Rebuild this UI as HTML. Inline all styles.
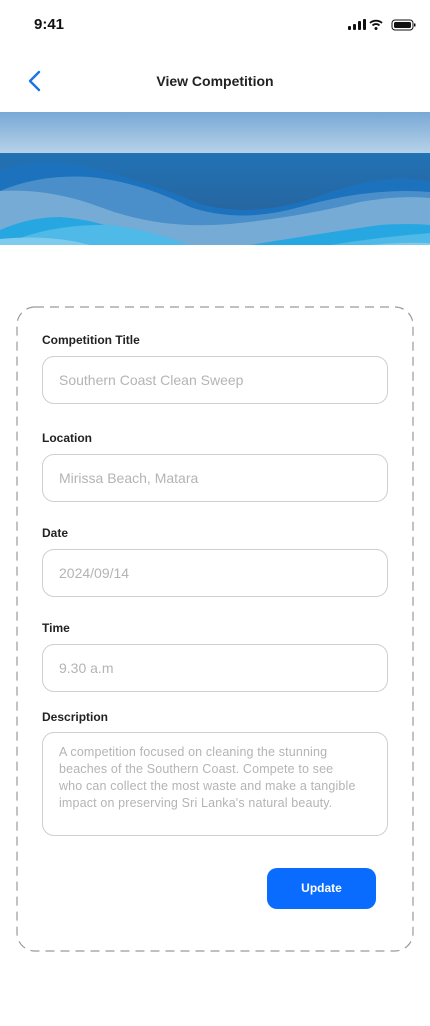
<!DOCTYPE html>
<html><head><meta charset="utf-8"><style>
*{box-sizing:border-box;margin:0;padding:0}
body{width:430px;height:1026px;background:#fff;font-family:"Liberation Sans",sans-serif;position:relative;overflow:hidden;color:#222}
.abs{position:absolute}
.lbl{position:absolute;left:42px;font-size:12px;font-weight:bold;color:#222}
.inp{position:absolute;left:42px;width:346px;height:48px;border:1px solid #cfcfcf;border-radius:12px;font-size:14px;color:#b4b4b4;padding-left:16px;line-height:46px}
</style></head><body>
<div class="abs" style="left:34px;top:16px;font-size:15px;font-weight:bold;color:#111">9:41</div>
<svg class="abs" style="left:348px;top:18px" width="68" height="14" viewBox="0 0 68 14">
<rect x="0" y="8" width="3" height="4" rx="1" fill="#111"/><rect x="5" y="6" width="3" height="6" rx="1" fill="#111"/><rect x="10" y="3" width="3" height="9" rx="1" fill="#111"/><rect x="15" y="1" width="3" height="11" rx="1" fill="#111"/>
<path d="M22 5a9 9 0 0 1 12 0M24.5 7.5a5 5 0 0 1 7 0" stroke="#111" stroke-width="1.8" fill="none"/><circle cx="28" cy="10.5" r="1.5" fill="#111"/>
<rect x="44" y="2" width="21" height="10" rx="3" fill="none" stroke="#111" stroke-width="1"/><rect x="46" y="4" width="17" height="6" rx="1.5" fill="#111"/><rect x="66" y="5.5" width="1.5" height="3" fill="#111"/>
</svg>
<svg class="abs" style="left:27px;top:70px" width="16" height="22" viewBox="0 0 16 22"><path d="M12 2L3 11l9 9" stroke="#1a73e8" stroke-width="2.4" fill="none" stroke-linecap="round" stroke-linejoin="round"/></svg>
<div class="abs" style="left:0;width:430px;top:73px;text-align:center;font-size:14px;font-weight:bold;color:#222">View Competition</div>
<svg class="abs" style="left:0;top:112px" width="430" height="133" viewBox="0 0 430 133">
<defs><linearGradient id="sky" x1="0" y1="0" x2="0" y2="1"><stop offset="0" stop-color="#78a9d6"/><stop offset="1" stop-color="#b6d1e8"/></linearGradient>
<linearGradient id="sea" x1="0" y1="0" x2="0" y2="1"><stop offset="0" stop-color="#2272b4"/><stop offset="1" stop-color="#285f96"/></linearGradient></defs>
<rect width="430" height="41" fill="url(#sky)"/>
<rect y="41" width="430" height="92" fill="url(#sea)"/>
<path d="M0 58Q40 45 80 53Q150 70 200 92Q260 108 330 80Q390 60 430 70V133H0Z" fill="#1c72bc"/>
<path d="M0 79Q40 62 90 65Q140 70 190 95Q240 112 300 95Q370 75 430 80V133H0Z" fill="#4a8fca"/>
<path d="M0 79Q50 76 100 95Q160 118 230 112Q300 105 360 90Q400 83 430 86V133H0Z" fill="#76abd6"/>
<path d="M0 118Q30 105 60 105Q100 108 130 123L150 133H0Z" fill="#27a7e1"/>
<path d="M20 126Q60 112 110 113Q150 118 190 133H0Z" fill="#4fb9e8"/>
<path d="M0 127Q50 122 90 133H0Z" fill="#7ecbee"/>
<path d="M250 133Q330 120 380 113Q410 111 430 113V133Z" fill="#27a7e1"/>
<path d="M330 133Q380 125 430 121V133Z" fill="#4fb9e8"/>
<path d="M370 133Q400 130 430 131V133Z" fill="#7ecbee"/>
</svg>
<svg class="abs" style="left:16px;top:306px" width="398" height="646"><rect x="1" y="1" width="396" height="644" rx="18" fill="none" stroke="#9a9a9a" stroke-width="1.2" stroke-dasharray="9 6"/></svg>
<div class="lbl" style="top:333px">Competition Title</div>
<div class="inp" style="top:356px">Southern Coast Clean Sweep</div>
<div class="lbl" style="top:431px">Location</div>
<div class="inp" style="top:454px">Mirissa Beach, Matara</div>
<div class="lbl" style="top:526px">Date</div>
<div class="inp" style="top:549px">2024/09/14</div>
<div class="lbl" style="top:621px">Time</div>
<div class="inp" style="top:644px">9.30 a.m</div>
<div class="lbl" style="top:710px">Description</div>
<div class="inp" style="top:732px;height:104px;line-height:17px;padding:11px 30px 0 16px;font-size:12.5px;letter-spacing:0.15px">A competition focused on cleaning the stunning beaches of the Southern Coast. Compete to see who can collect the most waste and make a tangible impact on preserving Sri Lanka's natural beauty.</div>
<div class="abs" style="left:267px;top:868px;width:109px;height:41px;background:#0a6cff;border-radius:10px;color:#fff;font-size:12px;font-weight:bold;text-align:center;line-height:41px">Update</div>
</body></html>
